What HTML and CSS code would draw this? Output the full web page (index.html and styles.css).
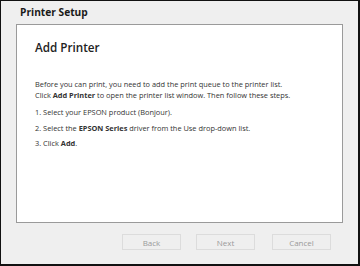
FILE: index.html
```html
<!DOCTYPE html>
<html>
<head>
<meta charset="utf-8">
<link rel="stylesheet" href="styles.css">
</head>
<body>
<div class="window">
  <h1 class="title">Printer Setup</h1>
  <div class="panel">
    <h2 class="heading">Add Printer</h2>
    <p class="para">Before you can print, you need to add the print queue to the printer list.<br>Click <b>Add Printer</b> to open the printer list window. Then follow these steps.</p>
    <ol class="steps">
      <li>1. Select your EPSON product (Bonjour).</li>
      <li>2. Select the <b>EPSON Series</b> driver from the Use drop-down list.</li>
      <li>3. Click <b>Add</b>.</li>
    </ol>
  </div>
  <div class="buttons">
    <button class="btn">Back</button>
    <button class="btn">Next</button>
    <button class="btn btn-cancel">Cancel</button>
  </div>
</div>
</body>
</html>
```
FILE: styles.css
```css
* { box-sizing: border-box; }
html, body { margin: 0; padding: 0; }
body { width: 360px; height: 266px; background: #000; }
.window {
  width: 360px;
  height: 266px;
  background: #efefef;
  border-style: solid;
  border-color: #111;
  border-width: 1px 2px 2px 1px;
  font-family: "Open Sans", "DejaVu Sans", sans-serif;
  color: #222;
  display: flex;
  flex-direction: column;
}
.title {
  margin: 0;
  padding: 4px 0 0 19px;
  height: 23px;
  font-size: 10.2px;
  font-weight: 700;
  line-height: 15px;
  color: #1a1a1a;
}
.panel {
  margin: 0 15px 0 15px;
  height: 199px;
  background: #fff;
  border: 1px solid #9a9a9a;
  padding: 13px 0 0 18px;
}
.heading {
  margin: 0;
  font-size: 11.7px;
  font-weight: 600;
  line-height: 18px;
  color: #222;
}
.para {
  margin: 23px 0 0 0;
  font-size: 7.4px;
  line-height: 11px;
  color: #333;
}
.steps {
  list-style: none;
  margin: 4px 0 0 0;
  padding: 0;
  font-size: 7.4px;
  line-height: 15.5px;
  color: #333;
}
.buttons {
  display: flex;
  justify-content: flex-end;
  gap: 15px;
  padding: 11px 27px 0 0;
}
.btn {
  width: 59px;
  height: 16px;
  padding: 0;
  background: #efefef;
  border: 1px solid #dcdcdc;
  font-family: "Open Sans", "DejaVu Sans", sans-serif;
  font-size: 8px;
  color: #9a9a9a;
}
.btn-cancel { margin-left: 2px; }
```
